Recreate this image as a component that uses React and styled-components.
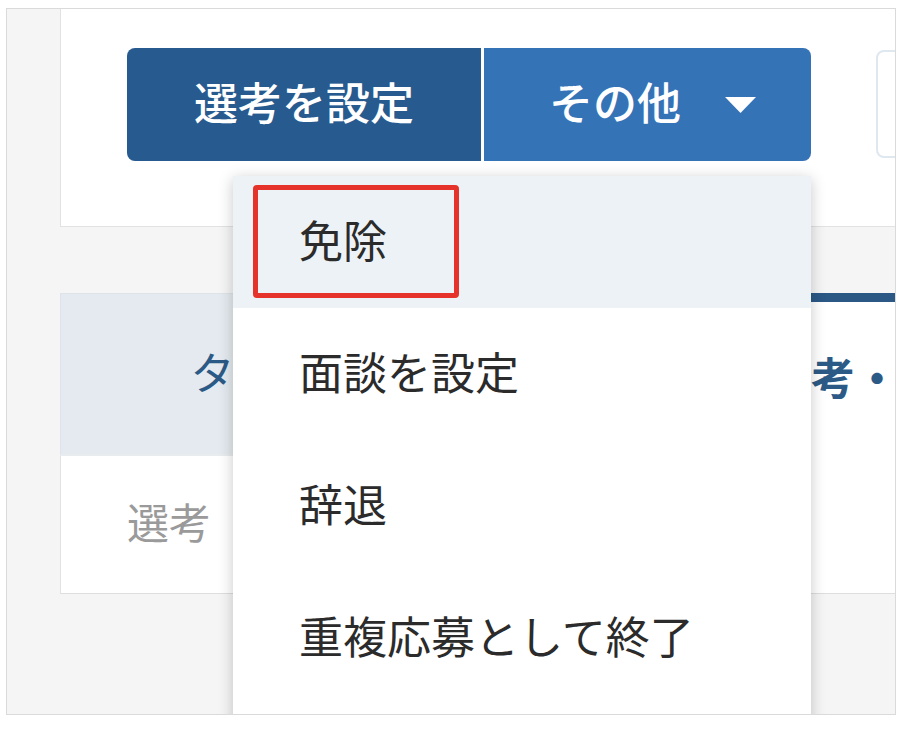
import React from "react";
import styled, { createGlobalStyle } from "styled-components";

const Global = createGlobalStyle`
  html, body { margin: 0; padding: 0; background: #ffffff; }
  body { font-family: "Noto Sans CJK JP", "Noto Sans", sans-serif; }
  * { box-sizing: border-box; }
`;

const Frame = styled.div`
  position: relative;
  margin: 8px 0 0 6px;
  width: 890px;
  height: 707px;
  border: 1px solid #dadada;
  background: #f5f5f5;
  overflow: hidden;
`;

const Card = styled.div`
  margin-left: 53px;
  width: 900px;
  height: 218px;
  background: #ffffff;
  border: 1px solid #e2e2e2;
  border-top: none;
  padding: 39px 0 0 66px;
  display: flex;
  align-items: flex-start;
`;

const SplitGroup = styled.div`
  display: flex;
  gap: 3px;
  background: #ffffff;
  flex-shrink: 0;
`;

const GroupButton = styled.button`
  height: 113px;
  width: ${(p) => p.$w}px;
  border: none;
  margin: 0;
  padding: ${(p) => (p.$menu ? "0 0 0 10px" : "0")};
  display: flex;
  align-items: center;
  justify-content: center;
  gap: 44px;
  background: ${(p) => (p.$menu ? "#3573b7" : "#275a8e")};
  border-radius: ${(p) => (p.$menu ? "0 8px 8px 0" : "8px 0 0 8px")};
  color: #ffffff;
  font-family: "Noto Sans CJK JP", sans-serif;
  font-size: 44px;
  font-weight: 500;
  line-height: 1;
`;

const Label = styled.span`
  display: block;
  padding-bottom: 7px;
`;

const GhostButton = styled.div`
  margin: 2px 0 0 65px;
  width: 200px;
  height: 108px;
  border: 2px solid #dfe7ef;
  border-radius: 8px;
  flex-shrink: 0;
`;

const Tabs = styled.div`
  margin: 66px 0 0 53px;
  display: flex;
  width: 1300px;
`;

const Tab = styled.div`
  width: ${(p) => p.$w}px;
  height: 163px;
  flex-shrink: 0;
  display: flex;
  align-items: center;
  justify-content: center;
  padding-bottom: 6px;
  font-size: 44px;
  line-height: 1;
  color: #2c5a86;
  font-weight: ${(p) => (p.$active ? 700 : 400)};
  background: ${(p) => (p.$active ? "#ffffff" : "#e4eaef")};
  border-top: ${(p) => (p.$active ? "9px solid #2c5886" : "1px solid #dde3e8")};
  border-left: ${(p) => (p.$active ? "none" : "1px solid #dde3e8")};
  border-bottom: ${(p) => (p.$active ? "none" : "2px solid #e8ecef")};
`;

const Row = styled.div`
  margin-left: 53px;
  width: 900px;
  height: 138px;
  background: #ffffff;
  border-left: 1px solid #e2e2e2;
  border-bottom: 1px solid #dedede;
  padding: 0 0 7px 66px;
  display: flex;
  align-items: center;
  font-size: 42px;
  line-height: 1;
  color: #9a9a9a;
`;

const Menu = styled.div`
  position: absolute;
  left: 226px;
  top: 167px;
  width: 578px;
  height: 600px;
  background: #ffffff;
  box-shadow: 0 3px 14px rgba(0, 0, 0, 0.22);
  display: flex;
  flex-direction: column;
`;

const MenuItem = styled.div`
  position: relative;
  height: 132px;
  flex-shrink: 0;
  padding: 0 0 6px 66px;
  display: flex;
  align-items: center;
  font-size: 44px;
  line-height: 1;
  color: #2b2b2b;
  background: ${(p) => (p.$active ? "#edf2f6" : "#ffffff")};
`;

const Highlight = styled.div`
  position: absolute;
  left: 20px;
  top: 9px;
  width: 206px;
  height: 113px;
  border: 5px solid #e5322a;
  border-radius: 4px;
`;

const Caret = () => (
  <svg width="31" height="16" viewBox="0 0 31 16" aria-hidden="true">
    <polygon points="0,0 31,0 15.5,16" fill="#ffffff" />
  </svg>
);

export default function App() {
  return (
    <>
      <Global />
      <Frame>
        <Card>
          <SplitGroup>
            <GroupButton $w={354}>
              <Label>選考を設定</Label>
            </GroupButton>
            <GroupButton $w={327} $menu>
              <Label>その他</Label>
              <Caret />
            </GroupButton>
          </SplitGroup>
          <GhostButton />
        </Card>
        <Tabs>
          <Tab $w={392}>タスク</Tab>
          <Tab $w={850} $active>選考・面談</Tab>
        </Tabs>
        <Row>選考</Row>
        <Menu>
          <MenuItem $active>
            免除
            <Highlight />
          </MenuItem>
          <MenuItem>面談を設定</MenuItem>
          <MenuItem>辞退</MenuItem>
          <MenuItem>重複応募として終了</MenuItem>
        </Menu>
      </Frame>
    </>
  );
}
